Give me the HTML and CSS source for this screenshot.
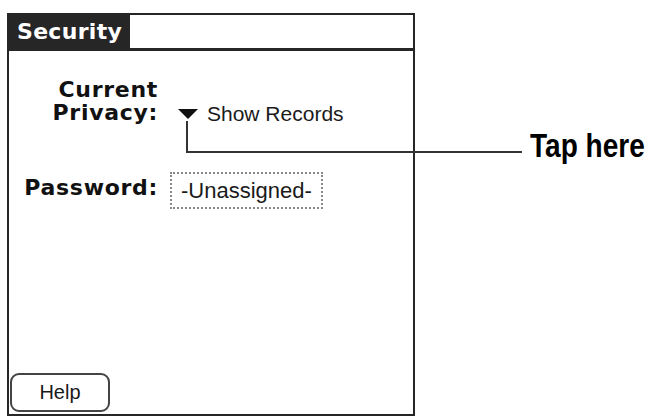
FILE: index.html
```html
<!DOCTYPE html>
<html lang="en">
<head>
  <meta charset="UTF-8">
  <title>Security</title>
  <link rel="stylesheet" href="styles.css">
</head>
<body>
  <div class="page">
    <div class="screen">
      <div class="titlebar">
        <h1 class="title">Security</h1>
      </div>

      <div class="form">
        <!-- privacy picker, with the callout pointing at it -->
        <div class="row row-privacy">
          <div class="label">Current<br>Privacy:</div>
          <div class="picker">
            <svg class="arrow" width="20" height="10" viewBox="0 0 20 10">
              <polygon points="0,0 20,0 10,10" fill="#111"/>
            </svg>
            <span>Show Records</span>
          </div>
          <div class="callout">
            <span class="callout-label">Tap here</span>
          </div>
        </div>

        <div class="row row-password">
          <div class="label">Password:</div>
          <div class="field">-Unassigned-</div>
        </div>
      </div>

      <div class="footer">
        <button class="btn">Help</button>
      </div>
    </div>
  </div>
</body>
</html>
```

FILE: styles.css
```css
body {
  margin: 0;
  background: #fff;
  color: #111;
  font-family: "Liberation Sans", Arial, sans-serif;
}
.page {
  padding: 13px 0 0 7px;
}
.screen {
  width: 408px;
  height: 403px;
  box-sizing: border-box;
  border: 2px solid #262626;
  display: flex;
  flex-direction: column;
}

/* title tab and the rule under it */
.titlebar {
  display: flex;
  height: 36px;
  box-sizing: border-box;
  border-bottom: 3px solid #262626;
}
.title {
  margin: 0;
  padding: 0 8px;
  background: #262626;
  color: #fff;
  font-family: "DejaVu Sans", sans-serif;
  font-weight: bold;
  font-size: 22px;
  line-height: 33px;
  letter-spacing: 0.3px;
}

.form {
  padding-top: 27px;
}
.row {
  display: flex;
}
.label {
  width: 149px;
  text-align: right;
  font-family: "DejaVu Sans", sans-serif;
  font-weight: bold;
  font-size: 22px;
  line-height: 23px;
  letter-spacing: 0.7px;
}
.row-privacy {
  position: relative;
  align-items: flex-end;
}
.picker {
  display: flex;
  align-items: center;
  gap: 9px;
  margin: 0 0 -2px 20px;
  font-size: 21px;
  line-height: 24px;
  color: #1a1a1a;
}
.arrow {
  display: block;
}

/* L-shaped leader line from the arrow out to the label */
.callout {
  position: absolute;
  left: 177px;
  top: 43px;
  width: 336px;
  height: 32px;
  box-sizing: border-box;
  border-left: 2px solid #333;
  border-bottom: 2px solid #333;
}
.callout-label {
  position: absolute;
  left: calc(100% + 8px);
  top: 8px;
  white-space: nowrap;
  font-weight: bold;
  font-size: 33px;
  line-height: 33px;
  color: #000;
  transform: scaleX(0.85);
  transform-origin: left center;
}

.row-password {
  margin-top: 48px;
  align-items: flex-start;
}
.row-password .label {
  margin-top: 4px;
}
.field {
  margin-left: 12px;
  height: 37px;
  box-sizing: border-box;
  padding: 0 9px;
  border: 2px dotted #888;
  font-size: 22px;
  line-height: 33px;
  color: #1a1a1a;
}

.footer {
  margin-top: auto;
}
.btn {
  display: block;
  margin: 0 0 2px 1px;
  width: 100px;
  height: 39px;
  padding: 0;
  background: #fff;
  border: 2px solid #444;
  border-radius: 9px;
  font-family: "Liberation Sans", Arial, sans-serif;
  font-size: 20px;
  color: #1a1a1a;
}
```
